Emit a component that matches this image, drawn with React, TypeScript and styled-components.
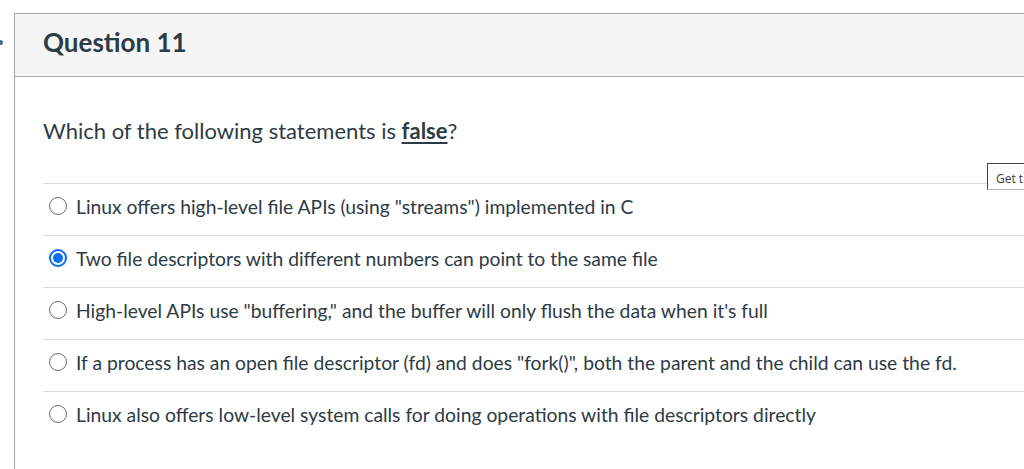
import React from "react";
import styled, { createGlobalStyle } from "styled-components";

const Global = createGlobalStyle`
  html, body { margin: 0; padding: 0; background: #fff; overflow: hidden; }
  body { font-family: Lato, "Open Sans", "Liberation Sans", sans-serif; color: #2d3b45; }
`;

const Page = styled.div`
  position: relative;
  width: 1024px;
  height: 469px;
  overflow: hidden;
  padding: 13px 0 0 14px;
  box-sizing: border-box;
`;

const EdgeDot = styled.span`
  position: absolute;
  left: -2px;
  top: 40px;
  width: 5px;
  height: 5px;
  border-radius: 50%;
  background: #4a6b8a;
`;

const Card = styled.section`
  width: 1060px;
  height: 470px;
  border-left: 1px solid #a8a8a8;
  border-top: 1px solid #a8a8a8;
  box-sizing: border-box;
`;

const Header = styled.header`
  height: 63px;
  background: #f5f5f5;
  border-bottom: 1px solid #a8a8a8;
  box-sizing: border-box;
  display: flex;
  align-items: center;
  padding: 0 0 6px 28px;
`;

const Title = styled.h2`
  margin: 0;
  font-size: 26px;
  font-weight: 700;
  color: #2d3b45;
  letter-spacing: 0;
`;

const Body = styled.div`
  padding: 36px 0 0 28px;
`;

const Prompt = styled.p`
  margin: 0 0 34px;
  font-size: 22px;
  line-height: 36px;
  color: #2d3b45;
  u {
    font-weight: 700;
    text-decoration-thickness: 2px;
    text-underline-offset: 3px;
  }
`;

const Answers = styled.div`
  display: flex;
  flex-direction: column;
`;

const Row = styled.label`
  display: flex;
  align-items: center;
  height: 52px;
  border-top: 1px solid #dcdcdc;
  box-sizing: border-box;
  padding: 0 0 7px 6px;
  gap: 9px;
  font-size: 19.3px;
  color: #2d3b45;
`;

const Radio = styled.span<{ $checked?: boolean }>`
  width: 18px;
  height: 18px;
  border-radius: 50%;
  box-sizing: border-box;
  flex: none;
  border: ${(p) => (p.$checked ? "2px solid #0b6cf5" : "1.5px solid #6b6b6b")};
  display: flex;
  align-items: center;
  justify-content: center;
  background: #fff;
  &::after {
    content: "";
    display: ${(p) => (p.$checked ? "block" : "none")};
    width: 10px;
    height: 10px;
    border-radius: 50%;
    background: #0b6cf5;
  }
`;

const Tab = styled.div`
  position: absolute;
  left: 987px;
  top: 163px;
  width: 60px;
  height: 27px;
  border: 1px solid #444;
  border-bottom-color: #bbb;
  background: #fff;
  box-sizing: border-box;
  font-size: 12px;
  padding: 6px 0 0 8px;
  font-family: "Open Sans", "Liberation Sans", sans-serif;
  color: #3a3a3a;
  white-space: nowrap;
`;

const answers = [
  'Linux offers high-level file APIs (using "streams") implemented in C',
  "Two file descriptors with different numbers can point to the same file",
  'High-level APIs use "buffering," and the buffer will only flush the data when it\'s full',
  'If a process has an open file descriptor (fd) and does "fork()", both the parent and the child can use the fd.',
  "Linux also offers low-level system calls for doing operations with file descriptors directly",
];

export default function App() {
  return (
    <>
      <Global />
      <Page>
        <EdgeDot />
        <Card>
          <Header>
            <Title>Question 11</Title>
          </Header>
          <Body>
            <Prompt>
              Which of the following statements is <u>false</u>?
            </Prompt>
            <Answers>
              {answers.map((a, i) => (
                <Row key={i}>
                  <Radio $checked={i === 1} />
                  <span>{a}</span>
                </Row>
              ))}
            </Answers>
          </Body>
        </Card>
        <Tab>Get t</Tab>
      </Page>
    </>
  );
}
